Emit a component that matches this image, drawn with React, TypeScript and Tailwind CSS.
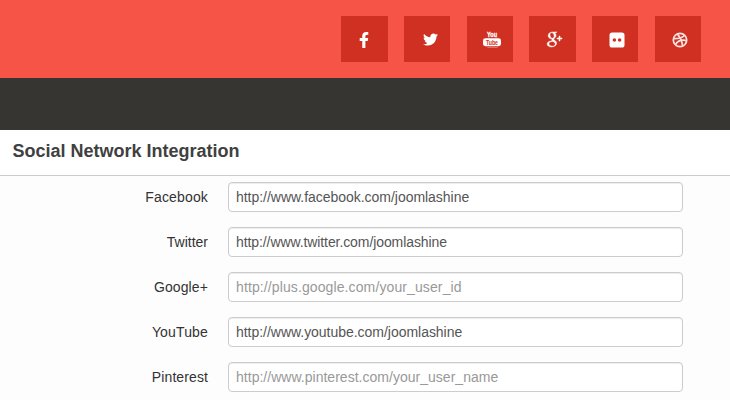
import type { ReactNode } from "react";
import { FaFacebookF, FaTwitter } from "react-icons/fa";
import { TiSocialGooglePlus } from "react-icons/ti";

function YouTubeIcon() {
  return (
    <svg width="18" height="18" viewBox="0 0 18 18" fill="#fff" className="overflow-visible" fontFamily="'Liberation Sans', Arial, sans-serif" fontWeight="700">
      <text x="4" y="6" fontSize="7" textLength="10" lengthAdjust="spacingAndGlyphs" stroke="#fff" strokeWidth="0.3">You</text>
      <rect x="0" y="7.2" width="18" height="8" rx="2.4" />
      <text x="3" y="13.7" fontSize="6.5" textLength="12" lengthAdjust="spacingAndGlyphs" fill="#d03022">Tube</text>
      <rect x="4.5" y="16" width="10" height="1" opacity="0.3" />
    </svg>
  );
}

function FlickrIcon() {
  return (
    <svg width="16" height="16" viewBox="0 0 16 16">
      <rect x="0.5" y="0.5" width="15" height="15" rx="2.6" fill="#fff" />
      <circle cx="5.4" cy="8" r="1.8" fill="#d03022" />
      <circle cx="10.6" cy="8" r="1.8" fill="#d03022" />
    </svg>
  );
}

function DribbbleIcon() {
  return (
    <svg width="16" height="16" viewBox="0 0 16 16" fill="none" stroke="#fbe4e1" strokeWidth="1.7">
      <circle cx="8" cy="8" r="6.7" />
      <path d="M5.3 1.9C8 5 10 9 10.7 14.2" />
      <path d="M1.4 6.7C6.2 6.8 10.2 5.9 12.6 3.2" />
      <path d="M3.4 12.8C5.6 8.8 9.7 7.5 14.6 8.6" />
    </svg>
  );
}

function Tile({ className, children }: { className: string; children: ReactNode }) {
  return <a className={`flex h-[46px] items-center justify-center bg-[#d03022] text-white ${className}`}>{children}</a>;
}

const fields = [
  { label: "Facebook", value: "http://www.facebook.com/joomlashine", labelClass: "tracking-[0.15px]", inputClass: "tracking-[-0.03px]" },
  { label: "Twitter", value: "http://www.twitter.com/joomlashine", labelClass: "", inputClass: "tracking-[-0.09px]" },
  { label: "Google+", placeholder: "http://plus.google.com/your_user_id", labelClass: "tracking-[0.1px]", inputClass: "tracking-[0.11px]" },
  { label: "YouTube", value: "http://www.youtube.com/joomlashine", labelClass: "tracking-[0.15px]", inputClass: "tracking-[-0.03px]" },
  { label: "Pinterest", placeholder: "http://www.pinterest.com/your_user_name", labelClass: "tracking-[0.1px]", inputClass: "tracking-[0.02px]" },
];

export default function App() {
  return (
    <div className="h-[400px] w-[730px] overflow-hidden bg-[#fdfdfd] font-['Liberation_Sans',Arial,sans-serif] text-[14px] text-[#333]">
      <header className="flex h-[78px] gap-4 bg-[#f55446] pt-4 pl-[341px]">
        <Tile className="w-[47px]"><FaFacebookF className="-ml-0.5 mt-0.5 h-4 w-[10px]" /></Tile>
        <Tile className="w-[46px] pl-1.5 pt-px"><FaTwitter size={15} /></Tile>
        <Tile className="ml-px w-[46px] pl-1 pt-0.5"><YouTubeIcon /></Tile>
        <Tile className="w-[47px] pl-0.5"><TiSocialGooglePlus size={24} stroke="currentColor" strokeWidth={0.5} /></Tile>
        <Tile className="w-[46px] pl-1 pt-0.5"><FlickrIcon /></Tile>
        <Tile className="ml-px w-[46px] pl-1 pt-0.5"><DribbbleIcon /></Tile>
      </header>
      <div className="h-[52px] bg-[#363532]" />
      <h2 className="h-[46px] border-b border-[#ccc] bg-white pl-[12.5px] text-[18px] leading-[42px] font-bold text-[#404040]">
        Social Network Integration
      </h2>
      <form className="flex flex-col gap-[15px] pt-1.5">
        {fields.map((f) => (
          <div key={f.label} className="flex h-[30px] items-center gap-5">
            <label className={`w-[208px] text-right ${f.labelClass}`}>{f.label}</label>
            <input
              type="text"
              defaultValue={f.value}
              placeholder={f.placeholder}
              className={`h-[30px] w-[455px] rounded border border-[#ccc] bg-white px-[7px] text-[#555] shadow-[inset_0_1px_1px_rgba(0,0,0,0.075)] placeholder:text-[#999] ${f.inputClass}`}
            />
          </div>
        ))}
      </form>
    </div>
  );
}
